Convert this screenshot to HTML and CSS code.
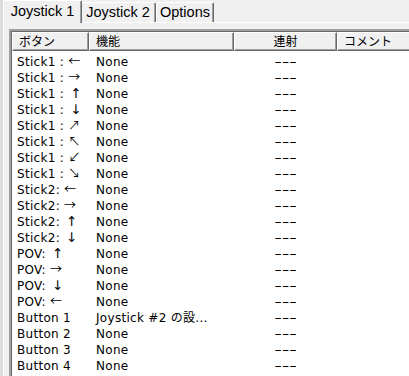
FILE: index.html
```html
<!DOCTYPE html>
<html lang="ja">
<head>
<meta charset="utf-8">
<title>Joystick</title>
<link rel="stylesheet" href="styles.css">
</head>
<body>
<div class="frame">
  <div class="tabs">
    <div class="tab sel t1">Joystick 1</div>
    <div class="tab t2">Joystick 2</div>
    <div class="tab t3">Options</div>
  </div>
  <div class="panel">
    <div class="lv">
      <div class="lv-in">
        <div class="hdr">
          <div class="hc">ボタン</div>
          <div class="hc">機能</div>
          <div class="hc ctr">連射</div>
          <div class="hc">コメント</div>
        </div>
        <div class="rows">
          <div class="row"><span class="c1">Stick1 : <span class="ar">←</span></span><span class="c2">None</span><span class="c3"><span class="dash">---</span></span><span></span></div>
          <div class="row"><span class="c1">Stick1 : <span class="ar">→</span></span><span class="c2">None</span><span class="c3"><span class="dash">---</span></span><span></span></div>
          <div class="row"><span class="c1">Stick1 : <span class="ar vt">↑</span></span><span class="c2">None</span><span class="c3"><span class="dash">---</span></span><span></span></div>
          <div class="row"><span class="c1">Stick1 : <span class="ar vt">↓</span></span><span class="c2">None</span><span class="c3"><span class="dash">---</span></span><span></span></div>
          <div class="row"><span class="c1">Stick1 : <span class="ar">↗</span></span><span class="c2">None</span><span class="c3"><span class="dash">---</span></span><span></span></div>
          <div class="row"><span class="c1">Stick1 : <span class="ar">↖</span></span><span class="c2">None</span><span class="c3"><span class="dash">---</span></span><span></span></div>
          <div class="row"><span class="c1">Stick1 : <span class="ar">↙</span></span><span class="c2">None</span><span class="c3"><span class="dash">---</span></span><span></span></div>
          <div class="row"><span class="c1">Stick1 : <span class="ar">↘</span></span><span class="c2">None</span><span class="c3"><span class="dash">---</span></span><span></span></div>
          <div class="row"><span class="c1">Stick2: <span class="ar">←</span></span><span class="c2">None</span><span class="c3"><span class="dash">---</span></span><span></span></div>
          <div class="row"><span class="c1">Stick2: <span class="ar">→</span></span><span class="c2">None</span><span class="c3"><span class="dash">---</span></span><span></span></div>
          <div class="row"><span class="c1">Stick2: <span class="ar vt">↑</span></span><span class="c2">None</span><span class="c3"><span class="dash">---</span></span><span></span></div>
          <div class="row"><span class="c1">Stick2: <span class="ar vt">↓</span></span><span class="c2">None</span><span class="c3"><span class="dash">---</span></span><span></span></div>
          <div class="row"><span class="c1">POV: <span class="ar vt">↑</span></span><span class="c2">None</span><span class="c3"><span class="dash">---</span></span><span></span></div>
          <div class="row"><span class="c1">POV: <span class="ar">→</span></span><span class="c2">None</span><span class="c3"><span class="dash">---</span></span><span></span></div>
          <div class="row"><span class="c1">POV: <span class="ar vt">↓</span></span><span class="c2">None</span><span class="c3"><span class="dash">---</span></span><span></span></div>
          <div class="row"><span class="c1">POV: <span class="ar">←</span></span><span class="c2">None</span><span class="c3"><span class="dash">---</span></span><span></span></div>
          <div class="row"><span class="c1">Button 1</span><span class="c2">Joystick #2 の設...</span><span class="c3"><span class="dash">---</span></span><span></span></div>
          <div class="row"><span class="c1">Button 2</span><span class="c2">None</span><span class="c3"><span class="dash">---</span></span><span></span></div>
          <div class="row"><span class="c1">Button 3</span><span class="c2">None</span><span class="c3"><span class="dash">---</span></span><span></span></div>
          <div class="row"><span class="c1">Button 4</span><span class="c2">None</span><span class="c3"><span class="dash">---</span></span><span></span></div>
        </div>
      </div>
    </div>
  </div>
</div>
</body>
</html>
```

FILE: styles.css
```css
html, body {
  margin: 0;
  padding: 0;
  background: #f0f0f0;
  overflow: hidden;
}

.frame {
  width: 409px;
  height: 376px;
  box-sizing: border-box;
  border-left: 3px solid #dcdcdc;
  overflow: hidden;
}

.tabs {
  display: flex;
  align-items: flex-start;
  height: 22px;
}

.tab {
  box-sizing: border-box;
  height: 20px;
  margin-top: 2px;
  padding-top: 1px;
  border-top: 1px solid #ffffff;
  border-left: 1px solid #ffffff;
  border-right: 1px solid #696969;
  box-shadow: inset -1px 0 #a0a0a0;
  border-radius: 2px 2px 0 0;
  background: #f0f0f0;
  font-family: "Liberation Sans", Arial, sans-serif;
  font-size: 14.5px;
  line-height: 16px;
  color: #000;
  text-align: center;
  white-space: nowrap;
}

.tab.sel {
  height: 23px;
  margin-top: 0;
  margin-right: -2px;
  padding-top: 2px;
  position: relative;
  z-index: 2;
}

.t1 { width: 79px; }
.t2 { width: 76px; }
.t3 { width: 58px; }

.panel {
  border-top: 1px solid #ffffff;
  border-left: 1px solid #ffffff;
  padding: 6px 0 0 5px;
}

.lv {
  width: 420px;
  height: 400px;
  border-top: 2px solid #a0a0a0;
  border-left: 2px solid #a0a0a0;
  background: #ffffff;
}

.lv-in {
  border-top: 1px solid #696969;
  border-left: 1px solid #696969;
  height: 100%;
}

.hdr {
  display: grid;
  grid-template-columns: 77px 145px 103px 1fr;
}

.hc {
  box-sizing: border-box;
  height: 19px;
  border-top: 1px solid #ffffff;
  border-left: 1px solid #ffffff;
  border-right: 1px solid #696969;
  border-bottom: 1px solid #696969;
  box-shadow: inset -1px -1px #a0a0a0;
  background: #f0f0f0;
  padding-left: 6px;
  font-family: "Noto Sans CJK JP", sans-serif;
  font-size: 12px;
  line-height: 16px;
  color: #000;
  white-space: nowrap;
  overflow: hidden;
}

.hc.ctr {
  text-align: center;
  padding-left: 0;
}

.rows {
  padding-top: 3px;
}

.row {
  display: grid;
  grid-template-columns: 77px 145px 103px 1fr;
  height: 16px;
  font-family: "DejaVu Sans", "Noto Sans CJK JP", sans-serif;
  font-size: 12px;
  line-height: 16px;
  letter-spacing: 0.3px;
  color: #000;
  white-space: nowrap;
}

.c1 { padding-left: 5px; }
.c2 { padding-left: 7px; }
.c3 { text-align: center; }

.ar {
  font-family: "Noto Sans CJK JP", sans-serif;
  letter-spacing: 0;
  line-height: 0;
}

.ar.vt {
  font-family: "DejaVu Sans", sans-serif;
  font-variant-emoji: text;
  font-size: 13.5px;
  padding: 0 3px 0 2px;
}

.dash {
  display: inline-block;
  transform: scaleX(1.75);
  letter-spacing: 0;
}
```
